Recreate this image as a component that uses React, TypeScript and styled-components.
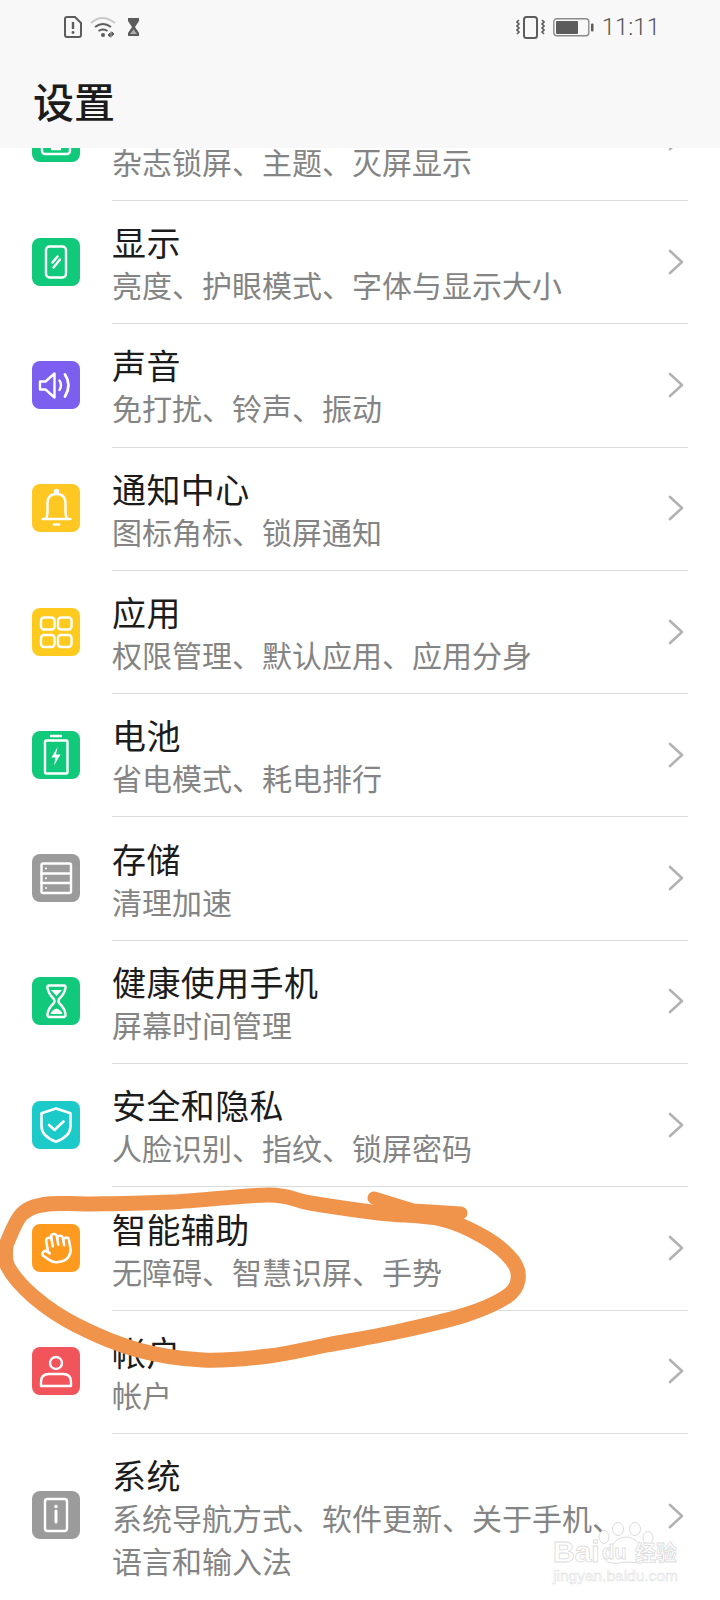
import React from "react";
import styled, { createGlobalStyle } from "styled-components";
import { Hand } from "lucide-react";

const Global = createGlobalStyle`
  html, body { margin: 0; padding: 0; background: #fff; }
  * { box-sizing: border-box; }
`;

const FONT = `"Noto Sans CJK SC", "Noto Sans", sans-serif`;

const Page = styled.div`
  position: relative;
  width: 720px;
  height: 1600px;
  overflow: hidden;
  background: #fff;
  font-family: ${FONT};
  display: flex;
  flex-direction: column;
`;
const Header = styled.header`
  flex: none;
  height: 148px;
  background: #f8f8f8;
  display: flex;
  flex-direction: column;
`;
const StatusBar = styled.div`
  height: 54px;
  padding: 0 60px 0 64px;
  display: flex;
  align-items: center;
  justify-content: space-between;
`;
const StatusGroup = styled.div`
  display: flex;
  align-items: center;
  gap: 8px;
`;
const Clock = styled.span`
  font-family: Roboto, "Liberation Sans", sans-serif;
  font-weight: 300;
  font-size: 24px;
  color: #555;
`;
const PageTitle = styled.h1`
  margin: 0;
  flex: 1;
  padding: 0 0 2px 33px;
  display: flex;
  align-items: center;
  font-size: 41px;
  font-weight: 500;
  color: #1c1c1c;
`;
const Viewport = styled.main`
  flex: 1;
  overflow: hidden;
`;
const List = styled.div`
  margin-top: -70.3px;
  padding-right: 32px;
`;
const Row = styled.div<{ $tall?: boolean }>`
  display: flex;
  align-items: stretch;
  height: ${(p) => (p.$tall ? "165px" : "123.3px")};
`;
const IconSlot = styled.div`
  flex: none;
  width: 112px;
  padding: 0 0 2px 32px;
  display: flex;
  align-items: center;
`;
const IconTile = styled.div<{ $bg: string }>`
  width: 48px;
  height: 48px;
  border-radius: 8px;
  background: ${(p) => p.$bg};
  display: flex;
  align-items: center;
  justify-content: center;
  flex: none;
`;
const Body = styled.div<{ $last?: boolean }>`
  flex: 1;
  display: flex;
  align-items: center;
  justify-content: space-between;
  padding-right: 4px;
  border-bottom: ${(p) => (p.$last ? "none" : "1.5px solid #dcdcdc")};
`;
const TextBlock = styled.div`
  width: 530px;
  padding-top: 2px;
`;
const Title = styled.div`
  font-size: 34px;
  line-height: 43px;
  min-height: 43px;
  letter-spacing: 0.4px;
  color: #1c1c1c;
`;
const Sub = styled.div`
  font-size: 30px;
  line-height: 43px;
  color: #848484;
`;
const ChevronIcon = styled.svg`
  flex: none;
  margin-bottom: 1px;
`;
const Overlay = styled.svg`
  position: absolute;
  left: 0;
  top: 0;
  pointer-events: none;
`;
const Watermark = styled.div`
  position: absolute;
  left: 552px;
  top: 1520px;
  width: 132px;
  height: 66px;
  color: #fff;
  -webkit-text-stroke: 0.8px #dcdcdc;
  font-family: "Liberation Sans", sans-serif;
`;
const WmBrand = styled.div`
  position: absolute;
  left: 1px;
  top: 15px;
  font-size: 30px;
  line-height: 34px;
  font-weight: 700;
`;
const WmDu = styled.div`
  position: absolute;
  left: 50px;
  top: 21px;
  font-size: 20px;
  line-height: 22px;
  font-weight: 700;
`;
const WmCn = styled.div`
  position: absolute;
  left: 83px;
  top: 18px;
  font-family: ${FONT};
  font-size: 21px;
  line-height: 26px;
  font-weight: 700;
  white-space: nowrap;
`;
const WmUrl = styled.div`
  position: absolute;
  left: 1px;
  top: 47px;
  font-size: 15.5px;
  line-height: 18px;
  white-space: nowrap;
  -webkit-text-stroke: 0.5px #dcdcdc;
`;
const Paw = styled.svg`
  position: absolute;
  left: 42px;
  top: 2px;
`;

const I = { fill: "none", stroke: "#fff", strokeWidth: 2.4, strokeLinecap: "round" as const, strokeLinejoin: "round" as const };

const Svg = ({ children }: { children: React.ReactNode }) => (
  <svg width="48" height="48" viewBox="0 0 48 48" {...I}>{children}</svg>
);

const icons = {
  wall: <Svg><rect x="10" y="8" width="28" height="32" rx="3" /><path d="M10 30h28M20 35h8" /></Svg>,
  display: (
    <Svg>
      <rect x="14" y="8.5" width="20" height="31" rx="3.5" />
      <path d="M20.5 24.5l5-6M21.5 29.5l6.5-8" />
    </Svg>
  ),
  sound: (
    <Svg>
      <path d="M8 20.5h5.5l9-8v24l-9-8H8z" />
      <path d="M27.5 19.5q3 4.5 0 9.500" />
      <path d="M33 13.500q7 10.500 0 22" strokeWidth="2.800" />
    </Svg>
  ),
  bell: (
    <Svg>
      <path d="M10.500 35h28" />
      <path d="M14 35q1.500-3 1.500-7v-8.500q0-9.500 9-9.500t9 9.500V28q0 4 1.500 7" />
      <circle cx="24.500" cy="7.500" r="1.500" fill="#fff" />
      <path d="M22 40.500h5" strokeWidth="2.600" />
    </Svg>
  ),
  apps: (
    <Svg>
      <rect x="9" y="9.500" width="13.500" height="12" rx="3" />
      <rect x="26" y="9.500" width="13.500" height="12" rx="3" />
      <rect x="9" y="27" width="13.500" height="12" rx="3" />
      <rect x="26" y="27" width="13.500" height="12" rx="3" />
    </Svg>
  ),
  battery: (
    <Svg>
      <path d="M19 5h10" />
      <rect x="13" y="9.500" width="22.500" height="33" rx="1.500" />
      <path d="M25.500 16l-6 10.500h4l-1.500 8 6.500-11h-4.500z" fill="#fff" stroke="none" />
    </Svg>
  ),
  storage: (
    <Svg>
      <rect x="9.500" y="9.500" width="29.500" height="29.500" rx="1.500" />
      <path d="M9.500 19.500H39M9.500 29H39" />
      <circle cx="14" cy="14.500" r="1" fill="#fff" stroke="none" />
      <circle cx="14" cy="24.300" r="1" fill="#fff" stroke="none" />
      <circle cx="14" cy="34" r="1" fill="#fff" stroke="none" />
    </Svg>
  ),
  hourglass: (
    <Svg>
      <path d="M17 8.500h15q2 0 1.500 2.500-1 6-6 10.500-2 2.500 0 5 5 4.500 6 10.500.5 2.500-1.500 3H17q-2-.5-1.500-3 1-6 6-10.500 2-2.500 0-5-5-4.500-6-10.500-.5-2.500 1.500-2.500z" />
      <path d="M19 13h11l-5.500 6z" fill="#fff" stroke="none" />
      <path d="M18.500 37q1-4 6-5.500 5 1.500 6 5.500z" fill="#fff" stroke="none" />
    </Svg>
  ),
  shield: (
    <Svg>
      <path d="M24 7.500l14.500 4.800v13q0 10-14.500 15.500C9.500 35.300 9.500 27 9.500 25.300v-13z" strokeWidth="2.600" />
      <path d="M17 24l5.500 5 9-8.500" strokeWidth="2.600" />
    </Svg>
  ),
  hand: <Hand size={34} color="#fff" strokeWidth={1.8} style={{ transform: "rotate(-10deg)" }} />,
  user: (
    <Svg>
      <circle cx="24" cy="16" r="6" />
      <path d="M9 39v-4q0-8 8-8h14q8 0 8 8v4z" />
    </Svg>
  ),
  info: (
    <Svg>
      <rect x="13" y="8" width="22" height="32" rx="2.500" />
      <path d="M24 20v11" strokeWidth="3" />
      <circle cx="24" cy="15.500" r="1.800" fill="#fff" stroke="none" />
    </Svg>
  ),
};

const Chevron = () => (
  <ChevronIcon width="16" height="26" viewBox="0 0 16 26" fill="none" stroke="#b2b2b2" strokeWidth="2.600" strokeLinecap="round" strokeLinejoin="round">
    <path d="M2 2l12 11L2 24" />
  </ChevronIcon>
);

type Item = { title: string; sub: string; bg: string; icon: keyof typeof icons; tall?: boolean };

const items: Item[] = [
  { title: "", sub: "杂志锁屏、主题、灭屏显示", bg: "#10c97a", icon: "wall" },
  { title: "显示", sub: "亮度、护眼模式、字体与显示大小", bg: "#10c97a", icon: "display" },
  { title: "声音", sub: "免打扰、铃声、振动", bg: "#7c5fee", icon: "sound" },
  { title: "通知中心", sub: "图标角标、锁屏通知", bg: "#ffc722", icon: "bell" },
  { title: "应用", sub: "权限管理、默认应用、应用分身", bg: "#ffca1e", icon: "apps" },
  { title: "电池", sub: "省电模式、耗电排行", bg: "#10c97a", icon: "battery" },
  { title: "存储", sub: "清理加速", bg: "#9b9b9b", icon: "storage" },
  { title: "健康使用手机", sub: "屏幕时间管理", bg: "#10c97a", icon: "hourglass" },
  { title: "安全和隐私", sub: "人脸识别、指纹、锁屏密码", bg: "#1ccbc9", icon: "shield" },
  { title: "智能辅助", sub: "无障碍、智慧识屏、手势", bg: "#ff9a1f", icon: "hand" },
  { title: "帐户", sub: "帐户", bg: "#f2545c", icon: "user" },
  { title: "系统", sub: "系统导航方式、软件更新、关于手机、语言和输入法", bg: "#9b9b9b", icon: "info", tall: true },
];

const loop: [number, number][] = [
  [6, 1245], [22, 1214], [48, 1204], [90, 1204], [172, 1202], [269, 1195], [310, 1203], [379, 1213], [441, 1219],
  [484, 1237], [512, 1260], [518, 1280], [506, 1297], [465, 1315], [396, 1332], [327, 1345], [269, 1356],
  [203, 1360], [138, 1350], [76, 1325], [34, 1297], [8, 1267], [6, 1245],
];

const smooth = (pts: [number, number][]) => {
  let d = `M${pts[0][0]} ${pts[0][1]}`;
  for (let i = 0; i < pts.length - 1; i++) {
    const p0 = pts[Math.max(i - 1, 0)];
    const p1 = pts[i];
    const p2 = pts[i + 1];
    const p3 = pts[Math.min(i + 2, pts.length - 1)];
    d += `C${p1[0] + (p2[0] - p0[0]) / 6} ${p1[1] + (p2[1] - p0[1]) / 6} ${p2[0] - (p3[0] - p1[0]) / 6} ${p2[1] - (p3[1] - p1[1]) / 6} ${p2[0]} ${p2[1]}`;
  }
  return d;
};

export default function App() {
  return (
    <Page>
      <Global />
      <Header>
        <StatusBar>
          <StatusGroup>
            <svg width="18" height="22" viewBox="0 0 18 22" fill="none" stroke="#5c5c5c" strokeWidth="2">
              <path d="M3 1h8l6 6v12q0 2-2 2H3q-2 0-2-2V3q0-2 2-2z" />
              <path d="M9 6v7" strokeWidth="2.400" />
              <circle cx="9" cy="16.500" r="1.400" fill="#5c5c5c" stroke="none" />
            </svg>
            <svg width="28" height="22" viewBox="0 0 28 22" fill="none" stroke="#5c5c5c" strokeWidth="2">
              <path d="M1 7q11-10 24 0" stroke="#c9c9c9" />
              <path d="M5 11q8-6 16 0" />
              <path d="M8.500 15q4.500-3 9 0" />
              <circle cx="13" cy="19" r="2" fill="#5c5c5c" stroke="none" />
              <path d="M21 15.500v6M20 17l-2 2 2 2zM22 16l2 2-2 2z" fill="#5c5c5c" strokeWidth="1" />
            </svg>
            <svg width="13" height="18" viewBox="0 0 13 18" style={{ marginLeft: 1 }}>
              <path d="M1 0h11v3L8 9l4 6v3H1v-3l4-6-4-6z" fill="#5c5c5c" />
              <path d="M6.500 11.500L3 16h7z" fill="#f8f8f8" opacity="0.55" />
            </svg>
          </StatusGroup>
          <StatusGroup>
            <svg width="29" height="23" viewBox="0 0 29 23" fill="none" stroke="#5c5c5c" strokeWidth="2">
              <rect x="8" y="1" width="13" height="21" rx="2.500" />
              <path d="M3 4l-2 2 2 2-2 2 2 2-2 2 2 2-2 2" strokeWidth="1.600" />
              <path d="M26 4l2 2-2 2 2 2-2 2 2 2-2 2 2 2" strokeWidth="1.600" />
            </svg>
            <svg width="41" height="19" viewBox="0 0 41 19" fill="none">
              <rect x="0.800" y="0.800" width="35" height="17" rx="3" stroke="#8a8a8a" strokeWidth="1.400" />
              <rect x="3" y="3" width="22" height="13" rx="1" fill="#5c5c5c" />
              <rect x="38" y="5.500" width="2.500" height="8" rx="1" fill="#5c5c5c" />
            </svg>
            <Clock>11:11</Clock>
          </StatusGroup>
        </StatusBar>
        <PageTitle>设置</PageTitle>
      </Header>
      <Viewport>
        <List>
          {items.map((it) => (
            <Row key={it.sub} $tall={it.tall}>
              <IconSlot>
                <IconTile $bg={it.bg}>{icons[it.icon]}</IconTile>
              </IconSlot>
              <Body $last={it.tall}>
                <TextBlock>
                  <Title>{it.title}</Title>
                  <Sub>{it.sub}</Sub>
                </TextBlock>
                <Chevron />
              </Body>
            </Row>
          ))}
        </List>
      </Viewport>
      <Overlay width="720" height="1600" viewBox="0 0 720 1600" fill="none" stroke="#f0934b" strokeLinecap="round" strokeLinejoin="round">
        <path d={smooth(loop)} strokeWidth="15" />
        <path d="M374 1198L413 1210L461 1213" strokeWidth="13" />
      </Overlay>
      <Watermark>
        <Paw width="68" height="48" viewBox="0 0 68 48" fill="#fff" stroke="#dcdcdc" strokeWidth="1">
          <ellipse cx="10" cy="15" rx="5" ry="6.500" />
          <ellipse cx="24" cy="7" rx="5.500" ry="6.500" />
          <ellipse cx="41" cy="7" rx="5.500" ry="6.500" />
          <ellipse cx="54" cy="16" rx="5" ry="6.500" />
          <path d="M32 15c10 0 14 9 20 13 5 5 1 14-8 13-4-.5-8-1-12-1s-8 2-14 1c-9-1-11-9-5-14 7-4 9-12 19-12z" />
        </Paw>
        <WmBrand>Bai</WmBrand>
        <WmDu>du</WmDu>
        <WmCn>经验</WmCn>
        <WmUrl>jingyan.baidu.com</WmUrl>
      </Watermark>
    </Page>
  );
}
